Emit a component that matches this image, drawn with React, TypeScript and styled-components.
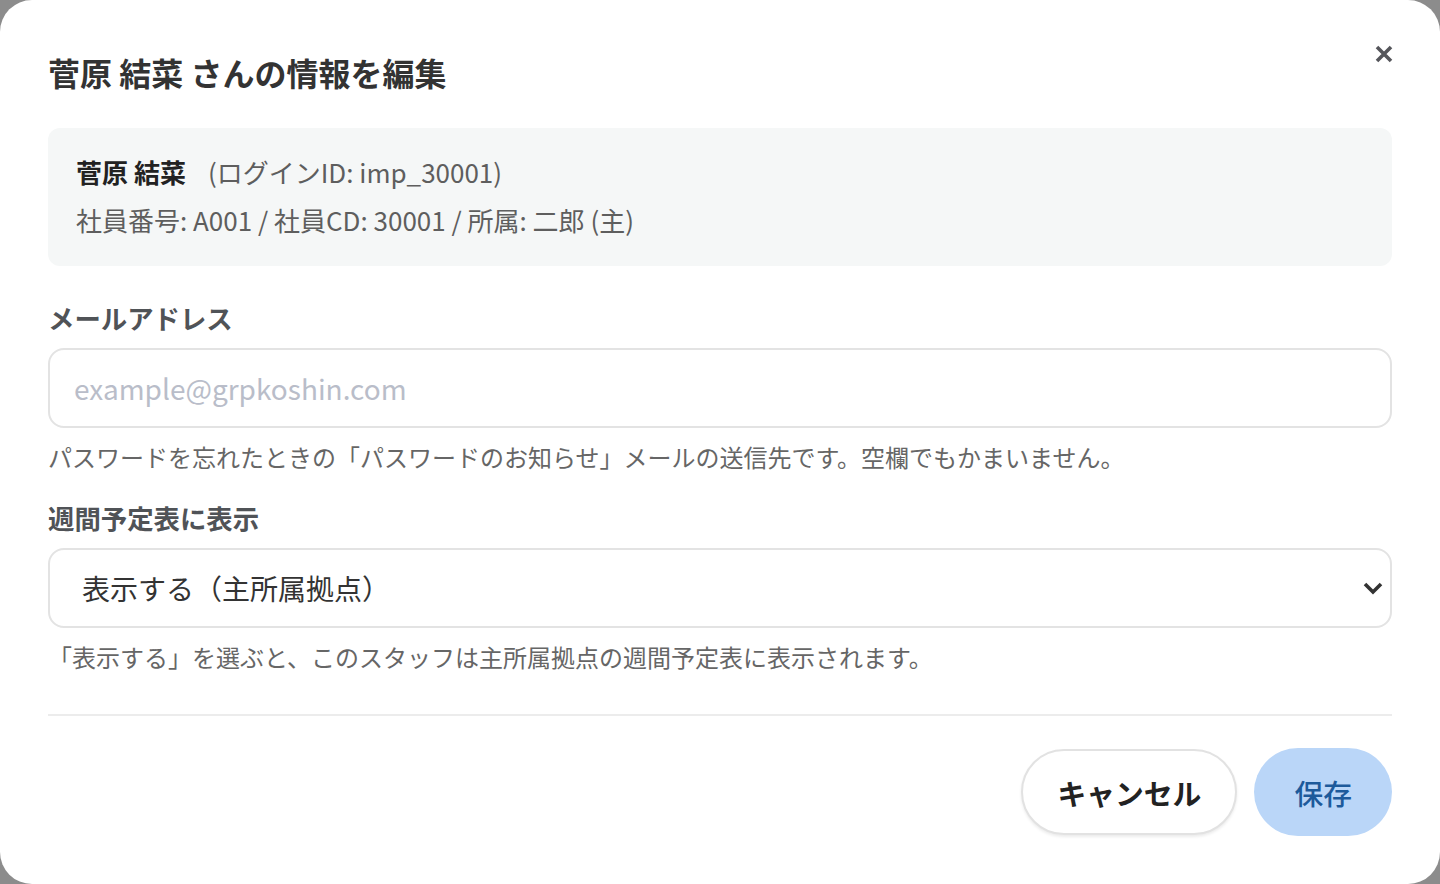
import React from "react";
import styled, { createGlobalStyle } from "styled-components";

const Global = createGlobalStyle`
  html, body { margin: 0; padding: 0; background: #8c8c8c; }
  body { font-family: "Noto Sans CJK JP", "Noto Sans", sans-serif; }
  * { box-sizing: border-box; }
`;

const Modal = styled.div`
  width: 1440px;
  height: 884px;
  background: #ffffff;
  border-radius: 32px;
  padding: 30px 48px 48px;
  display: flex;
  flex-direction: column;
  font-family: "Noto Sans CJK JP", "Noto Sans", sans-serif;
`;

const Header = styled.div`
  display: flex;
  justify-content: space-between;
  align-items: flex-start;
`;

const Title = styled.h2`
  margin: 17px 0 0;
  font-size: 32px;
  line-height: 51px;
  font-weight: 700;
  color: #333333;
`;

const CloseButton = styled.button`
  width: 48px;
  height: 48px;
  margin-right: -16px;
  border: none;
  background: transparent;
  padding: 0;
  display: flex;
  align-items: center;
  justify-content: center;
  color: #55565b;
  cursor: pointer;
`;

const InfoBox = styled.div`
  margin-top: 30px;
  background: #f5f7f7;
  border-radius: 12px;
  padding: 20px 28px 22px;
  display: flex;
  flex-direction: column;
`;

const InfoLine = styled.div`
  font-size: 26px;
  line-height: 48px;
  color: #5e5e5e;
  white-space: nowrap;
`;

const Name = styled.span`
  font-weight: 700;
  color: #222222;
  margin-right: 22px;
`;

const Field = styled.div<{ $top: number }>`
  margin-top: ${(p) => p.$top}px;
  display: flex;
  flex-direction: column;
`;

const Label = styled.label`
  font-size: 26.4px;
  line-height: 38px;
  font-weight: 700;
  color: #505357;
  margin-bottom: 11px;
`;

const Input = styled.input`
  height: 80px;
  width: 100%;
  border: 2px solid #e3e3e3;
  border-radius: 16px;
  padding: 0 24px;
  font-family: "Noto Sans CJK JP", "Noto Sans", sans-serif;
  font-size: 28px;
  color: #333;
  outline: none;
  &::placeholder { color: #b9bdc9; }
`;

const SelectWrap = styled.div`
  position: relative;
  height: 80px;
`;

const Select = styled.select`
  appearance: none;
  -webkit-appearance: none;
  width: 100%;
  height: 80px;
  border: 2px solid #e3e3e3;
  border-radius: 16px;
  padding: 0 60px 0 32px;
  background: #fff;
  font-family: "Noto Sans CJK JP", "Noto Sans", sans-serif;
  font-size: 28px;
  color: #333;
  outline: none;
`;

const Chevron = styled.svg`
  position: absolute;
  right: 8px;
  top: 50%;
  transform: translateY(-50%);
  pointer-events: none;
`;

const Help = styled.p`
  margin: 11px 0 0;
  font-size: 24px;
  line-height: 36px;
  color: #666666;
  white-space: nowrap;
`;

const Divider = styled.hr`
  margin: 39px 0 0;
  border: none;
  border-top: 2px solid #ececec;
`;

const Footer = styled.div`
  margin-top: 32px;
  display: flex;
  justify-content: flex-end;
  align-items: center;
  gap: 17px;
`;

const Button = styled.button<{ $primary?: boolean }>`
  height: ${(p) => (p.$primary ? 88 : 86)}px;
  border-radius: 999px;
  font-family: "Noto Sans CJK JP", "Noto Sans", sans-serif;
  font-size: 28.8px;
  cursor: pointer;
  ${(p) =>
    p.$primary
      ? `
    background: #bad6f8;
    color: #1d5a9b;
    border: none;
    padding: 0 40px;
    font-weight: 500;
  `
      : `
    background: #ffffff;
    color: #222222;
    border: 2px solid #e2e2e2;
    box-shadow: 0 2px 3px rgba(0,0,0,0.08);
    padding: 0 34px;
    font-weight: 700;
  `}
`;

export default function App() {
  return (
    <>
      <Global />
      <Modal>
        <Header>
          <Title>菅原 結菜 さんの情報を編集</Title>
          <CloseButton aria-label="閉じる">
            <svg width="20" height="20" viewBox="0 0 20 20">
              <path d="M3 3 L17 17 M17 3 L3 17" stroke="currentColor" strokeWidth="3.6" strokeLinecap="butt" />
            </svg>
          </CloseButton>
        </Header>
        <InfoBox>
          <InfoLine>
            <Name>菅原 結菜</Name>(ログインID: imp_30001)
          </InfoLine>
          <InfoLine>社員番号: A001 / 社員CD: 30001 / 所属: 二郎 (主)</InfoLine>
        </InfoBox>
        <Field $top={33}>
          <Label>メールアドレス</Label>
          <Input placeholder="example@grpkoshin.com" />
          <Help>パスワードを忘れたときの「パスワードのお知らせ」メールの送信先です。空欄でもかまいません。</Help>
        </Field>
        <Field $top={24}>
          <Label>週間予定表に表示</Label>
          <SelectWrap>
            <Select defaultValue="main">
              <option value="main">表示する（主所属拠点）</option>
              <option value="none">表示しない</option>
            </Select>
            <Chevron width="22" height="14" viewBox="0 0 22 14">
              <path d="M3 3 L11 11 L19 3" fill="none" stroke="#333" strokeWidth="3.6" />
            </Chevron>
          </SelectWrap>
          <Help>「表示する」を選ぶと、このスタッフは主所属拠点の週間予定表に表示されます。</Help>
        </Field>
        <Divider />
        <Footer>
          <Button>キャンセル</Button>
          <Button $primary>保存</Button>
        </Footer>
      </Modal>
    </>
  );
}
